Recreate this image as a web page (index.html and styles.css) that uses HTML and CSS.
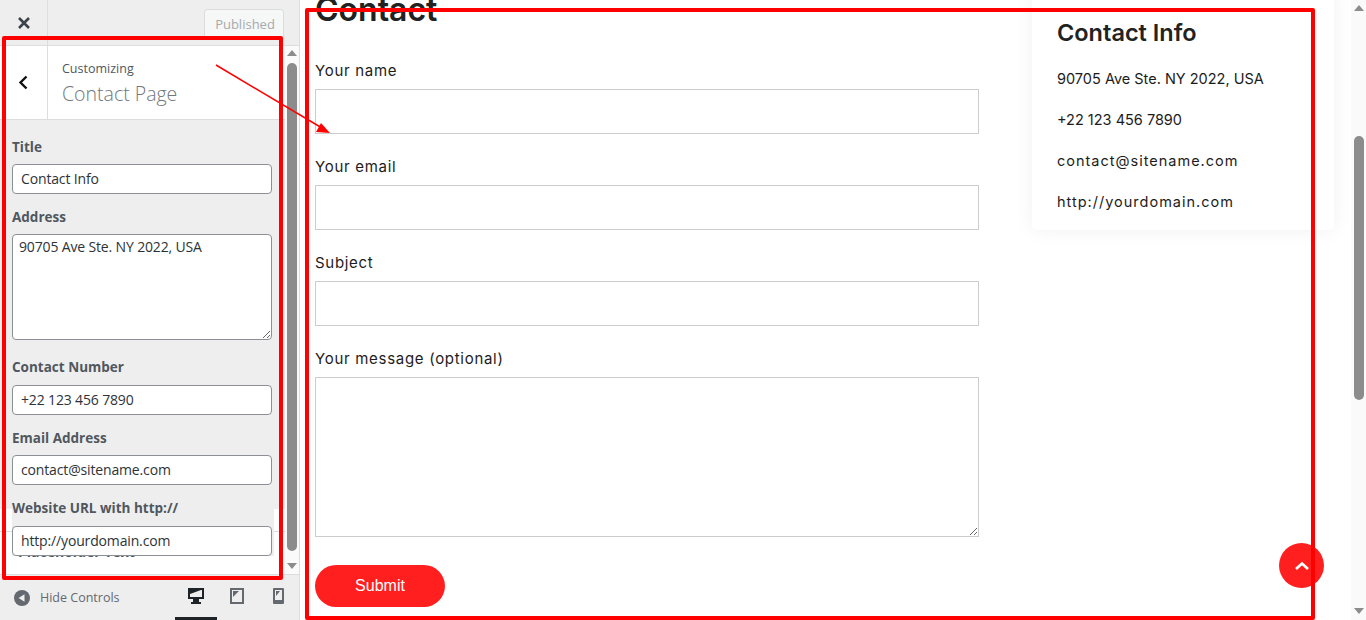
FILE: index.html
```html
<!DOCTYPE html>
<html lang="en">
  <head>
    <meta charset="UTF-8" />
    <meta name="viewport" content="width=device-width, initial-scale=1.0" />
    <title>Customize: Contact Page</title>
    <link rel="stylesheet" href="styles.css">
  </head>
  <body>
    <aside class="sidebar">
      <div class="topbar">
        <div class="close-btn">
          <svg width="14" height="14" viewBox="0 0 14 14"><path d="M2 2l10 10M12 2L2 12" stroke="#3c434a" stroke-width="2.6" fill="none"/></svg>
        </div>
        <button class="publish-btn">Published</button>
      </div>
      <div class="controls">
        <div class="controls-col">
          <div class="section-head">
            <div class="back-btn">
              <svg width="12" height="16" viewBox="0 0 12 16"><path d="M8.500 1.500L2.500 7.500l6 6" stroke="#111" stroke-width="2.4" fill="none"/></svg>
            </div>
            <div class="section-title">
              <span class="crumb">Customizing</span>
              <h2>Contact Page</h2>
            </div>
          </div>
          <div class="fields">
            <div class="field">
              <label>Title</label>
              <input type="text" value="Contact Info" />
            </div>
            <div class="field">
              <label>Address</label>
              <textarea>90705 Ave Ste. NY 2022, USA</textarea>
            </div>
            <div class="field loose">
              <label>Contact Number</label>
              <input type="text" value="+22 123 456 7890" />
            </div>
            <div class="field">
              <label>Email Address</label>
              <input type="text" value="contact@sitename.com" />
            </div>
            <div class="field loose last">
              <label>Website URL with http://</label>
              <input type="text" value="http://yourdomain.com" />
            </div>
            <div class="next-label">Placeholder Text</div>
          </div>
        </div>
        <div class="vscroll side-scroll">
          <span class="arrow-up"></span>
          <span class="thumb"></span>
          <span class="arrow-down"></span>
        </div>
      </div>
      <div class="footer">
        <div class="hide-controls">
          <svg width="16" height="16" viewBox="0 0 16 16"><circle cx="8" cy="8" r="8" fill="#646970"/><path d="M10.500 4.200v7.600L4.600 8z" fill="#eee"/></svg>
          <span>Hide Controls</span>
        </div>
        <div class="devices">
          <div class="device active">
            <svg width="16" height="16" viewBox="0 0 16 16"><path d="M0 0h16v11h-5v3h2v2H3v-2h2v-3H0zM2 2v7h12V2z" fill="#1d2327" fill-rule="evenodd"/><path d="M2 2h11L2 6z" fill="#1d2327"/></svg>
          </div>
          <div class="device tablet">
            <svg width="14" height="16" viewBox="0 0 14 16"><path d="M0 0h14v16H0zM2 2v12h10V2z" fill="#646970" fill-rule="evenodd"/><path d="M3 3h6L3 9z" fill="#646970"/></svg>
          </div>
          <div class="device">
            <svg width="11" height="16" viewBox="0 0 11 16"><path d="M1 0h9a1 1 0 0 1 1 1v14a1 1 0 0 1-1 1H1a1 1 0 0 1-1-1V1a1 1 0 0 1 1-1zM2 2v10h7V2z" fill="#646970" fill-rule="evenodd"/><path d="M3 3h4L3 8z" fill="#646970"/></svg>
          </div>
        </div>
      </div>
    </aside>

    <main class="preview">
      <div class="page">
        <section class="contact-form">
          <h1>Contact</h1>
          <label>Your name</label>
          <input type="text" />
          <label>Your email</label>
          <input type="text" />
          <label>Subject</label>
          <input type="text" />
          <label>Your message (optional)</label>
          <textarea></textarea>
          <button class="submit-btn">Submit</button>
        </section>
        <section class="info-card">
          <h3>Contact Info</h3>
          <p>90705 Ave Ste. NY 2022, USA</p>
          <p>+22 123 456 7890</p>
          <p class="wide">contact@sitename.com</p>
          <p class="wide">http://yourdomain.com</p>
        </section>
      </div>
      <div class="vscroll page-scroll">
        <span class="arrow-up"></span>
        <span class="thumb"></span>
        <span class="arrow-down"></span>
      </div>
    </main>

    <div class="to-top">
      <svg width="16" height="10" viewBox="0 0 16 10"><path d="M2 8l6-5.500L14 8" stroke="#fff" stroke-width="2.600" fill="none"/></svg>
    </div>

    <!-- red annotations drawn on top of the screenshot -->
    <div class="mark mark-side"></div>
    <div class="mark mark-main"></div>
    <svg class="mark-arrow" width="130" height="80" viewBox="0 0 130 80">
      <path d="M6 5L112 68" stroke="#f00" stroke-width="1.500" fill="none"/>
      <path d="M120 73l-14-1 5-9z" fill="#f00"/>
    </svg>
  </body>
</html>
```

FILE: styles.css
```css
* {
  padding: 0;
  margin: 0;
  box-sizing: border-box;
}
body {
  height: 620px;
  display: flex;
  overflow: hidden;
  background: #fff;
  font-family: "Open Sans", sans-serif;
}

/* customizer sidebar */
.sidebar {
  width: 300px;
  height: 620px;
  display: flex;
  flex-direction: column;
  background: #eee;
  border-right: 1px solid #ddd;
}
.topbar {
  height: 46px;
  display: flex;
  justify-content: space-between;
  border-bottom: 1px solid #ddd;
}
.close-btn {
  width: 48px;
  display: flex;
  align-items: center;
  justify-content: center;
  border-right: 1px solid #ddd;
}
.publish-btn {
  width: 80px;
  height: 30px;
  margin: 9px 15px 0 0;
  padding-left: 2px;
  background: #f6f7f7;
  border: 1px solid #dcdcde;
  border-radius: 3px;
  color: #a7aaad;
  font-family: "Open Sans", sans-serif;
  font-size: 13px;
}
.controls {
  height: 529px;
  display: flex;
  border-bottom: 1px solid #ddd;
}
.controls-col {
  width: 285px;
  display: flex;
  flex-direction: column;
}
.section-head {
  height: 74px;
  display: flex;
  background: #fff;
  border-bottom: 1px solid #ddd;
}
.back-btn {
  width: 48px;
  display: flex;
  align-items: center;
  justify-content: center;
  border-right: 1px solid #ddd;
}
.section-title {
  padding: 15px 0 0 14px;
}
.crumb {
  display: block;
  font-size: 12.5px;
  line-height: 16px;
  color: #50575e;
}
.section-title h2 {
  margin-top: 4px;
  font-size: 19.5px;
  line-height: 26px;
  font-weight: 300;
  color: #72777c;
}
.fields {
  flex: 1;
  overflow: hidden;
  padding: 18px 0 0 12px;
  background: linear-gradient(#eee 389px, #fff 389px, #fff 411px, #ddd 411px, #ddd 412px, #fff 412px);
}
.field {
  width: 262px;
  margin-bottom: 14px;
}
.field label {
  display: block;
  height: 18px;
  margin-bottom: 8px;
  font-size: 13.5px;
  line-height: 18px;
  font-weight: 700;
  color: #50575e;
}
.field.loose label {
  margin-bottom: 9px;
}
.field input,
.field textarea {
  display: block;
  width: 260px;
  height: 30px;
  padding: 0 8px 2px;
  background: #fff;
  border: 1px solid #8c8f94;
  border-radius: 4px;
  font-family: "Open Sans", sans-serif;
  font-size: 14px;
  letter-spacing: -0.15px;
  color: #2c3338;
}
.field textarea {
  height: 106px;
  padding: 2px 6px;
  margin-bottom: 18px;
  line-height: 19px;
}
.field.last {
  margin-bottom: 0;
  background: #eee;
}
.field.last input {
  position: relative;
  z-index: 1;
}
.next-label {
  margin-top: -13px;
  padding-left: 6px;
  font-size: 14px;
  line-height: 18px;
  font-weight: 700;
  color: #50575e;
}
.footer {
  flex: 1;
  display: flex;
  justify-content: space-between;
}
.hide-controls {
  display: flex;
  align-items: center;
  gap: 10px;
  padding-left: 14px;
  height: 45px;
  font-size: 12.5px;
  color: #646970;
}
.devices {
  display: flex;
}
.device {
  width: 42px;
  height: 45px;
  display: flex;
  align-items: center;
  justify-content: center;
  padding-bottom: 1px;
  border-bottom: 3px solid transparent;
}
.device.tablet {
  width: 40px;
}
.device.active {
  border-bottom-color: #1d2327;
}

/* fake scrollbars */
.vscroll {
  width: 14px;
  display: flex;
  flex-direction: column;
  align-items: center;
  background: #fafafa;
}
.thumb {
  width: 10px;
  background: #8c8c8c;
  border-radius: 5px;
}
.arrow-up,
.arrow-down {
  width: 0;
  height: 0;
  border-left: 5px solid transparent;
  border-right: 5px solid transparent;
}
.arrow-up {
  border-bottom: 6px solid #8c8c8c;
}
.arrow-down {
  border-top: 6px solid #8c8c8c;
}
.side-scroll {
  padding-top: 4px;
}
.side-scroll .thumb {
  height: 488px;
  margin: 7px 0 12px;
}
.page-scroll {
  width: 15px;
  padding-top: 5px;
}
.page-scroll .thumb {
  height: 264px;
  margin: 125px 0 208px;
}

/* previewed page */
.preview {
  flex: 1;
  display: flex;
  height: 620px;
  overflow: hidden;
}
.page {
  flex: 1;
  display: flex;
  padding-left: 15px;
  color: #1c1c1c;
  font-family: Inter, sans-serif;
}
.contact-form {
  width: 664px;
  margin-top: -14px;
}
.contact-form h1 {
  height: 73px;
  font-size: 32px;
  line-height: 48px;
  font-weight: 600;
  color: #222;
}
.contact-form label {
  display: block;
  height: 24px;
  margin-bottom: 6px;
  font-size: 15px;
  line-height: 24px;
  letter-spacing: 0.7px;
}
.contact-form input,
.contact-form textarea {
  display: block;
  width: 664px;
  height: 45px;
  margin-bottom: 21px;
  border: 1px solid #ccc;
  background: #fff;
}
.contact-form textarea {
  height: 160px;
  margin-bottom: 28px;
}
.submit-btn {
  width: 130px;
  height: 42px;
  background: #ff1f1f;
  border: none;
  border-radius: 21px;
  color: #fff;
  font-family: "Liberation Sans", sans-serif;
  font-size: 16px;
}
.info-card {
  width: 302px;
  height: 244px;
  margin: -14px 0 0 53px;
  padding: 29px 25px 0;
  background: #fff;
  border-radius: 4px;
  box-shadow: 0 0 20px rgba(0, 0, 0, 0.06);
}
.info-card h3 {
  height: 36px;
  margin-bottom: 15px;
  font-size: 23.5px;
  line-height: 36px;
  font-weight: 600;
  color: #222;
}
.info-card p {
  height: 41px;
  font-size: 14.5px;
  line-height: 26px;
}
.info-card p.wide {
  letter-spacing: 1px;
}

/* things lying over the page */
.to-top {
  position: absolute;
  left: 1279px;
  top: 543px;
  width: 45px;
  height: 45px;
  display: flex;
  align-items: center;
  justify-content: center;
  background: #ff1f1f;
  border-radius: 50%;
}
.mark {
  position: absolute;
  border: 4px solid #f00;
  border-radius: 2px;
  pointer-events: none;
}
.mark-side {
  left: 2px;
  top: 36px;
  width: 281px;
  height: 544px;
}
.mark-main {
  left: 305px;
  top: 8px;
  width: 1010px;
  height: 612px;
}
.mark-arrow {
  position: absolute;
  left: 210px;
  top: 60px;
}
```
